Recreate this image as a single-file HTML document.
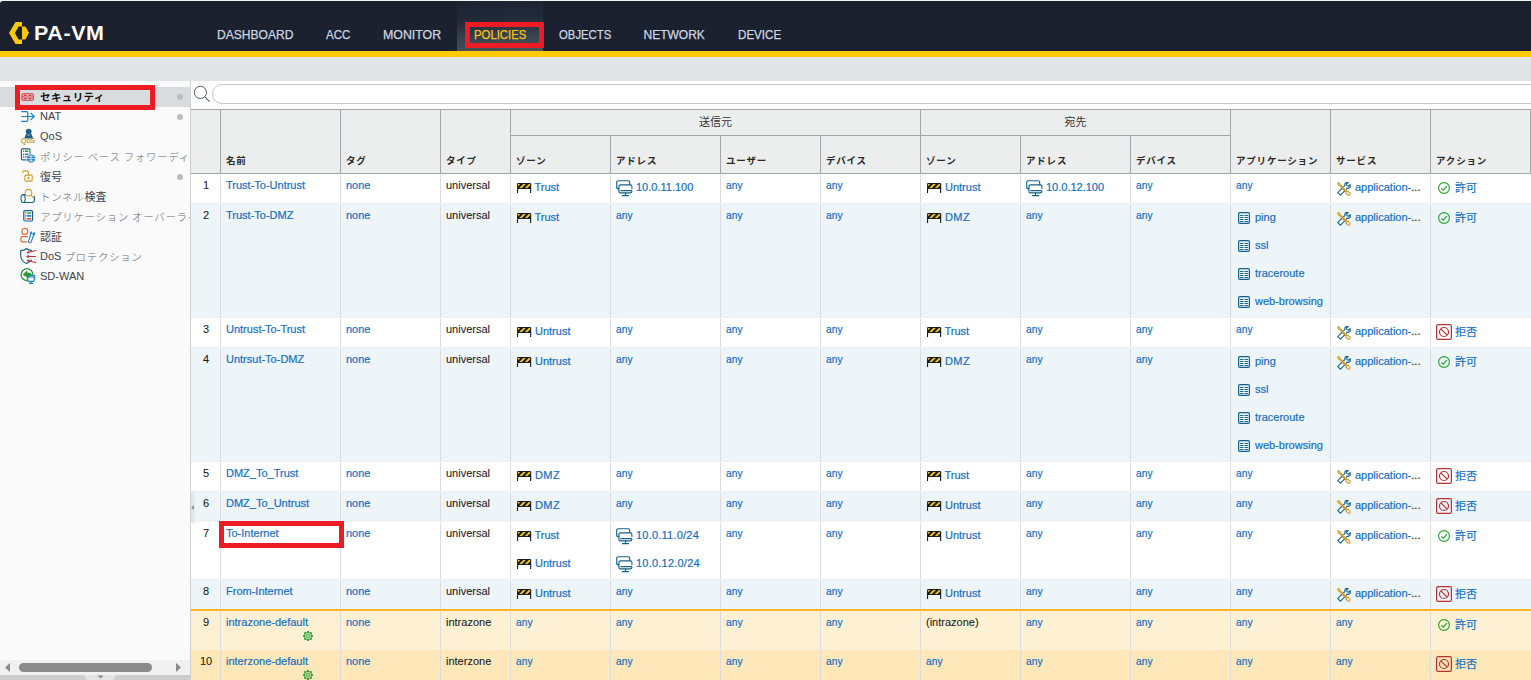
<!DOCTYPE html>
<html lang="ja"><head><meta charset="utf-8"><title>PA-VM</title>
<style>
*{box-sizing:border-box;margin:0;padding:0}
html,body{width:1531px;height:680px;overflow:hidden;background:#fff}
body{font-family:"Liberation Sans", "Noto Sans CJK JP", sans-serif;font-size:11px;color:#1a1a1a;position:relative}
.abs{position:absolute}
#top{left:0;top:0;width:1531px;height:1px;background:#f4f4f4}
#hdr{left:0;top:1px;width:1531px;height:50px;background:#1b212f;border-top-left-radius:3px}
#ybar{left:0;top:51px;width:1531px;height:6px;background:#fdca08}
#gbar{left:0;top:57px;width:1531px;height:24px;background:#e2e3e5}
.nav{position:absolute;top:27px;height:16px;line-height:16px;font-size:12px;color:#cdd6e2;white-space:nowrap;transform-origin:left center;-webkit-text-stroke:0.25px currentColor}
#tabbg{left:457px;top:1px;width:86px;height:50px;background:linear-gradient(176deg,#1c2230 0%,#222a3a 38%,#3a4450 72%,#4b545c 100%)}
.redbox{position:absolute;border:5px solid #ed1c24}
#logo-t{left:34px;top:20px;font-size:20px;font-weight:bold;color:#fff;line-height:26px;letter-spacing:0.6px;white-space:nowrap;transform-origin:left center;transform:scaleX(1.07)}
#side{left:0;top:81px;width:190px;height:599px;background:#fafafa;overflow:hidden}
#sideb{left:190px;top:81px;width:1px;height:599px;background:#cfcfcf}
.si{position:absolute;left:0;width:190px;height:20px}
.si .t{position:absolute;left:40px;top:0;line-height:19px;font-size:11px;color:#3a4450;white-space:nowrap}
.ka{font-size:10.5px;font-weight:300;color:#636b74;letter-spacing:0.65px;position:relative;top:0.6px}
.kj{position:relative;top:0.6px}
.sel .ka{font-weight:bold;color:#111;letter-spacing:0.4px}
.si .ic{position:absolute;left:20px;top:1px;width:16px;height:16px}
.si .dot{position:absolute;left:177px;top:7px;width:6px;height:6px;border-radius:50%;background:#bdbdbd}
#main{left:191px;top:81px;width:1340px;height:599px;background:#fff}
#srch{left:212px;top:84px;width:1340px;height:20px;border:1px solid #c6c6c6;border-radius:10px;background:#fff}
#thead{left:191px;top:109px;width:1340px;height:65px;background:#eceeee;border-top:1px solid #a2a6aa;border-bottom:1px solid #a2a6aa}
.vl{position:absolute;width:1px;background:#a2a6aa}
.hl{position:absolute;height:1px;background:#a2a6aa}
.th{position:absolute;font-size:9.5px;font-weight:bold;color:#2a2a2a;line-height:14px;white-space:nowrap;letter-spacing:0.8px}
.thg{position:absolute;font-size:11px;color:#333;line-height:14px;white-space:nowrap;text-align:center}
.row{position:absolute;left:191px;width:1340px}
.cv{position:absolute;width:1px;background:#dcdcde}
.c{position:absolute;white-space:nowrap;line-height:14px;font-size:11px;color:#146fc4;-webkit-text-stroke:0.2px currentColor}
.a{transform:scaleX(0.93);transform-origin:left center}
.k{color:#1a1a1a;-webkit-text-stroke:0.08px currentColor}
.num{position:absolute;left:0;width:30px;text-align:center;line-height:14px;font-size:11px;color:#1a1a1a;-webkit-text-stroke:0.08px currentColor}
.jp{font-size:11px}
svg{position:absolute;overflow:visible}
</style></head>
<body>
<svg class="abs" style="left:0;top:0" width="0" height="0"><defs><clipPath id="zc"><rect x="0.9" y="0.9" width="12.4" height="4.3" rx="0.6"/></clipPath></defs></svg>
<div class="abs" id="top"></div>
<div class="abs" id="hdr"></div>
<div class="abs" id="tabbg"></div>
<div class="abs" id="ybar"></div>
<div class="abs" id="gbar"></div>
<svg class="abs" style="left:0;top:0" width="40" height="60" viewBox="0 0 40 60"><path d="M9 33 L15.5 22 L22 22 L22 26.6 L18.6 26.6 L14.9 33 L18.6 39.4 L22 39.4 L22 44 L15.5 44 Z" fill="#fdc809"/><path d="M22 26.6 L25.4 26.6 L29 32.8 L25.4 39.4 L22 39.4 Z" fill="#fdc809"/></svg>
<div class="abs" id="logo-t">PA-VM</div>
<div class="nav" id="nav-DASHBOARD" style="left:217.0px;transform:scaleX(1.005)">DASHBOARD</div>
<div class="nav" id="nav-ACC" style="left:325.6px;transform:scaleX(0.960)">ACC</div>
<div class="nav" id="nav-MONITOR" style="left:382.5px;transform:scaleX(1.029)">MONITOR</div>
<div class="nav" id="nav-POLICIES" style="left:474.0px;transform:scaleX(0.945);color:#f6c51b">POLICIES</div>
<div class="nav" id="nav-OBJECTS" style="left:558.5px;transform:scaleX(0.945)">OBJECTS</div>
<div class="nav" id="nav-NETWORK" style="left:643.5px;transform:scaleX(1.000)">NETWORK</div>
<div class="nav" id="nav-DEVICE" style="left:737.5px;transform:scaleX(0.967)">DEVICE</div>
<div class="redbox" style="left:465px;top:22px;width:79px;height:26px"></div>
<div class="abs" id="side">
<div class="abs" style="left:0;top:6px;width:190px;height:20px;background:#d9dcde"></div>
<div class="si sel" id="si0" style="top:6px"><svg class="ic" viewBox="0 0 16 16"><rect x="2" y="5.7" width="11.3" height="6.6" rx="1.2" fill="#f3cfd0" stroke="#c73a3e" stroke-width="1.1"/><path d="M2 9H13.3" stroke="#c73a3e" stroke-width="0.9"/><path d="M3.8 7.4H6.8M8.5 7.4H11.5M3.8 10.7H6.8M8.5 10.7H11.5" stroke="#c73a3e" stroke-width="1.2"/></svg><span class="t"><span class="ka">セキュリティ</span></span><span class="dot"></span></div>
<div class="si" id="si1" style="top:26px"><svg class="ic" viewBox="0 0 16 16"><path d="M1.3 3.7H6.3Q7.8 3.7 7.8 5.2V11.9Q7.8 13.4 6.3 13.4H1.3M1.3 8.5H14M10.6 4.9L14.2 8.5L10.6 12.1" fill="none" stroke="#1a80c2" stroke-width="1.2"/></svg><span class="t">NAT</span><span class="dot"></span></div>
<div class="si" id="si2" style="top:46px"><svg class="ic" viewBox="0 0 16 16"><circle cx="8.7" cy="3.6" r="2.9" fill="#1f5f86"/><path d="M4.2 10.6L5.9 6.2Q8.7 4.8 11.5 6.2L13.2 10.6Z" fill="#1f5f86"/><path d="M7.4 6.6H10L8.7 8.2Z" fill="#9fc0d6"/><text x="0.8" y="15.3" font-size="7.4" font-weight="bold" fill="#cf9f33" font-family="Liberation Sans,sans-serif" letter-spacing="-0.4">QoS</text></svg><span class="t">QoS</span></div>
<div class="si" id="si3" style="top:66px"><svg class="ic" viewBox="0 0 16 16"><rect x="1.4" y="0.9" width="8.6" height="11" rx="1.2" fill="#fff" stroke="#1f5f86" stroke-width="1.1"/><path d="M3 3.3H4.2M5 3.3H8.4" stroke="#2e9a48" stroke-width="1.5"/><path d="M3 6.2H4.2M5 6.2H8.4" stroke="#1a80c2" stroke-width="1.5"/><path d="M3 9.1H4.2M5 9.1H8.4" stroke="#c73a3e" stroke-width="1.5"/><circle cx="11" cy="10.6" r="4.6" fill="#1a80c2" stroke="#fafafa" stroke-width="0.8"/><path d="M11 6.4V14.8M6.8 10.6H15.2M8 7.8Q11 9.6 14 7.8M8 13.4Q11 11.6 14 13.4" fill="none" stroke="#e8f2fa" stroke-width="0.8"/></svg><span class="t"><span class="ka">ポリシー</span> <span class="ka">ベース</span> <span class="ka">フォワーディング</span></span></div>
<div class="si" id="si4" style="top:86px"><svg class="ic" viewBox="0 0 16 16"><rect x="4.9" y="7.1" width="7.3" height="6" rx="1" fill="none" stroke="#d29b2b" stroke-width="1.1"/><path d="M2.6 5.2Q2.4 2.9 4.8 2.9H6.4Q8.4 2.9 8.4 4.8V7.1" fill="none" stroke="#d29b2b" stroke-width="1.1"/><rect x="7.6" y="9" width="1.8" height="2.2" rx="0.4" fill="#d29b2b"/></svg><span class="t"><span class="kj">復号</span></span><span class="dot"></span></div>
<div class="si" id="si5" style="top:106px"><svg class="ic" viewBox="0 0 16 16"><path d="M3.2 6.6Q1 6.6 1 10.5Q1 14.5 3.2 14.5H12.4Q14.6 14.5 14.6 10.5Q14.6 8.6 13.8 7.6M3.2 6.6H5.2M3.2 6.6Q5.2 6.6 5.2 10.5Q5.2 14.5 3.2 14.5" fill="none" stroke="#1f5f86" stroke-width="1.1"/><circle cx="8.5" cy="4.7" r="3.3" fill="#fafafa" stroke="#d29b2b" stroke-width="1.1"/><path d="M10.9 7L14 10.4" stroke="#d29b2b" stroke-width="1.1"/></svg><span class="t"><span class="ka">トンネル</span><span class="kj">検査</span></span></div>
<div class="si" id="si6" style="top:126px"><svg class="ic" viewBox="0 0 16 16"><rect x="3.8" y="2.6" width="8.8" height="10.4" rx="1.2" fill="#fff" stroke="#1f5f86" stroke-width="1.2"/><path d="M5.3 5H6.4M7.2 5H11.2" stroke="#2e9a48" stroke-width="1.6"/><path d="M5.3 7.9H6.4M7.2 7.9H11.2" stroke="#1a80c2" stroke-width="1.6"/><path d="M5.3 10.8H6.4M7.2 10.8H11.2" stroke="#c73a3e" stroke-width="1.6"/></svg><span class="t"><span class="ka">アプリケーション</span> <span class="ka">オーバーライド</span></span></div>
<div class="si" id="si7" style="top:146px"><svg class="ic" viewBox="0 0 16 16"><circle cx="4.8" cy="3.4" r="3" fill="none" stroke="#e2623a" stroke-width="1.15"/><path d="M8 8.6H2.4Q0.9 8.6 0.9 10.2V12.4Q0.9 13.8 2.4 13.8H7" fill="none" stroke="#e2623a" stroke-width="1.15"/><path d="M8.3 13.6L10.5 7.4Q9.6 5.4 11.2 3.8L11.8 5.8L13.2 6.2L14 4.4Q15.4 6.6 13.2 8.2L11 14.4Q9.4 15.4 8.3 13.6Z" fill="#fafafa" stroke="#1a80c2" stroke-width="1.1" stroke-linejoin="round"/></svg><span class="t"><span class="kj">認証</span></span></div>
<div class="si" id="si8" style="top:166px"><svg class="ic" viewBox="0 0 16 16"><path d="M12 2.6Q8.6 2.4 6.6 0.5Q4.4 2.6 0.7 2.6V7.4Q0.7 12.6 6.6 15.6Q10.2 13.8 11.6 11.6" fill="none" stroke="#1f5f86" stroke-width="1.15" stroke-linejoin="round"/><path d="M7 4.7L16 2.4M6.6 8.5H16M7 12.3L16 14.8" stroke="#c0353a" stroke-width="1.05"/><path d="M8.8 2.8L6.4 4.9L9.4 5.6ZM8.8 6.8L6 8.5L8.8 10.2ZM9.4 11.3L6.4 12.2L8.8 14.2Z" fill="#c0353a"/></svg><span class="t">DoS <span class="ka">プロテクション</span></span></div>
<div class="si" id="si9" style="top:186px"><svg class="ic" viewBox="0 0 16 16"><circle cx="7" cy="6.6" r="5.9" fill="#fafafa" stroke="#2a9a3a" stroke-width="1.3"/><path d="M2.6 6.8L7 2.6V4.6Q11.4 4 12.2 7.4Q12.4 9.6 10.6 11.2L6.6 11.6L7 9.2Z" fill="#2a9a3a"/><rect x="9.4" y="7.6" width="5.4" height="4" rx="0.8" fill="#fafafa" stroke="#1a80c2" stroke-width="1.1"/><rect x="7.8" y="9" width="6.4" height="4.4" rx="0.8" fill="#fafafa" stroke="#1a80c2" stroke-width="1.1"/><path d="M11 13.4V15.2M9 15.4H13" stroke="#1a80c2" stroke-width="1.1"/></svg><span class="t">SD-WAN</span></div>
<div class="abs" style="left:0;top:579px;width:190px;height:15px;background:#f1f1f1"></div>
<div class="abs" style="left:19px;top:582px;width:133px;height:9px;border-radius:5px;background:#8b8b8b"></div>
<svg class="abs" style="left:0;top:579px" width="190" height="15"><path d="M5 7.5L10 3V12Z" fill="#8b8b8b"/><path d="M181 7.5L176 3V12Z" fill="#8b8b8b"/></svg>
<div class="abs" style="left:0;top:594px;width:190px;height:5px;background:#cdcdcd"></div>
<svg class="abs" style="left:84px;top:594px" width="34" height="5"><path d="M0 0H32L29 5H3Z" fill="#e3e3e3"/><path d="M13.5 0.5H19.5L16.5 3.5Z" fill="#8b8b8b"/></svg>
</div>
<div class="abs" id="sideb"></div>
<div class="redbox" style="left:15px;top:85px;width:140px;height:25px"></div>
<div class="abs" id="main"></div>
<svg class="abs" style="left:191px;top:83px" width="22" height="22" viewBox="0 0 22 22"><circle cx="9.4" cy="9.4" r="6.1" fill="none" stroke="#555b62" stroke-width="1"/><path d="M13.8 13.8L18.6 18.6" stroke="#555b62" stroke-width="1.1"/></svg>
<div class="abs" id="srch"></div>
<div class="abs" id="thead"></div>
<div class="vl" style="left:220px;top:110px;height:64px"></div>
<div class="vl" style="left:340px;top:110px;height:64px"></div>
<div class="vl" style="left:440px;top:110px;height:64px"></div>
<div class="vl" style="left:510px;top:110px;height:64px"></div>
<div class="vl" style="left:610px;top:136px;height:38px"></div>
<div class="vl" style="left:720px;top:136px;height:38px"></div>
<div class="vl" style="left:820px;top:136px;height:38px"></div>
<div class="vl" style="left:920px;top:110px;height:64px"></div>
<div class="vl" style="left:1020px;top:136px;height:38px"></div>
<div class="vl" style="left:1130px;top:136px;height:38px"></div>
<div class="vl" style="left:1230px;top:110px;height:64px"></div>
<div class="vl" style="left:1330px;top:110px;height:64px"></div>
<div class="vl" style="left:1430px;top:110px;height:64px"></div>
<div class="vl" style="left:1530px;top:110px;height:64px"></div>
<div class="hl" style="left:511px;top:135px;width:720px"></div>
<div class="thg" style="left:511px;top:115px;width:409px">送信元</div>
<div class="thg" style="left:921px;top:115px;width:309px">宛先</div>
<div class="th" id="th0" style="left:226px;top:154px">名前</div>
<div class="th" id="th1" style="left:346px;top:154px">タグ</div>
<div class="th" id="th2" style="left:446px;top:154px">タイプ</div>
<div class="th" id="th3" style="left:516px;top:154px">ゾーン</div>
<div class="th" id="th4" style="left:616px;top:154px">アドレス</div>
<div class="th" id="th5" style="left:726px;top:154px">ユーザー</div>
<div class="th" id="th6" style="left:826px;top:154px">デバイス</div>
<div class="th" id="th7" style="left:926px;top:154px">ゾーン</div>
<div class="th" id="th8" style="left:1026px;top:154px">アドレス</div>
<div class="th" id="th9" style="left:1136px;top:154px">デバイス</div>
<div class="th" id="th10" style="left:1236px;top:154px">アプリケーション</div>
<div class="th" id="th11" style="left:1336px;top:154px">サービス</div>
<div class="th" id="th12" style="left:1436px;top:154px">アクション</div>
<div class="row" id="r1" style="top:174px;height:29px;background:#ffffff">
<div class="cv" style="left:29px;top:1px;height:28px"></div>
<div class="cv" style="left:149px;top:1px;height:28px"></div>
<div class="cv" style="left:249px;top:1px;height:28px"></div>
<div class="cv" style="left:319px;top:1px;height:28px"></div>
<div class="cv" style="left:419px;top:1px;height:28px"></div>
<div class="cv" style="left:529px;top:1px;height:28px"></div>
<div class="cv" style="left:629px;top:1px;height:28px"></div>
<div class="cv" style="left:729px;top:1px;height:28px"></div>
<div class="cv" style="left:829px;top:1px;height:28px"></div>
<div class="cv" style="left:939px;top:1px;height:28px"></div>
<div class="cv" style="left:1039px;top:1px;height:28px"></div>
<div class="cv" style="left:1139px;top:1px;height:28px"></div>
<div class="cv" style="left:1239px;top:1px;height:28px"></div>
<div class="abs" style="left:0;top:29px;width:1340px;height:1px;background:#eff1f1"></div>
<div class="num" style="top:4px">1</div>
<div class="c" style="left:35px;top:4px">Trust-To-Untrust</div>
<div class="c" style="left:155px;top:4px">none</div>
<div class="c k" style="left:255px;top:4px">universal</div>
<svg style="left:326px;top:9px" width="15" height="11" viewBox="0 0 15 11"><rect x="0" y="0" width="14.2" height="6.1" rx="1.3" fill="#141a26"/><g clip-path="url(#zc)"><path d="M0 0.9H3.4L0 4.3ZM2 5.2L6.3 0.9H8.9L4.6 5.2ZM7.6 5.2L11.9 0.9H13.5V1.9L10.2 5.2ZM12.9 5.2L13.5 4.6V5.2Z" fill="#fdc809"/></g><rect x="0" y="5" width="1.1" height="5.1" rx="0.4" fill="#141a26"/><rect x="13.1" y="5" width="1.1" height="5.1" rx="0.4" fill="#141a26"/></svg>
<div class="c" style="left:343.5px;top:6px">Trust</div>
<svg style="left:425px;top:6px" width="17" height="17" viewBox="0 0 17 17"><g fill="none" stroke="#14628c" stroke-width="1.15" stroke-linecap="round" stroke-linejoin="round"><path d="M2.6 8.6H2.2Q0.7 8.6 0.7 7.1V2.2Q0.7 0.7 2.2 0.7H12.2Q13.7 0.7 13.7 2.2V4.6"/><path d="M15.9 8.4V6.4Q15.9 4.8 14.4 4.8H4.4Q2.9 4.8 2.9 6.4V11.2Q2.9 12.8 4.4 12.8H14.4Q15.9 12.8 15.9 11.2Q15.9 10.6 15.2 10.6H4.8"/><path d="M9.5 12.8V15.4M6.4 15.6H12.6"/></g></svg>
<div class="c" style="left:445px;top:6px">10.0.11.100</div>
<div class="c a" style="left:535px;top:4px">any</div>
<div class="c a" style="left:635px;top:4px">any</div>
<svg style="left:736px;top:9px" width="15" height="11" viewBox="0 0 15 11"><rect x="0" y="0" width="14.2" height="6.1" rx="1.3" fill="#141a26"/><g clip-path="url(#zc)"><path d="M0 0.9H3.4L0 4.3ZM2 5.2L6.3 0.9H8.9L4.6 5.2ZM7.6 5.2L11.9 0.9H13.5V1.9L10.2 5.2ZM12.9 5.2L13.5 4.6V5.2Z" fill="#fdc809"/></g><rect x="0" y="5" width="1.1" height="5.1" rx="0.4" fill="#141a26"/><rect x="13.1" y="5" width="1.1" height="5.1" rx="0.4" fill="#141a26"/></svg>
<div class="c" style="left:754.0px;top:6px">Untrust</div>
<svg style="left:835px;top:6px" width="17" height="17" viewBox="0 0 17 17"><g fill="none" stroke="#14628c" stroke-width="1.15" stroke-linecap="round" stroke-linejoin="round"><path d="M2.6 8.6H2.2Q0.7 8.6 0.7 7.1V2.2Q0.7 0.7 2.2 0.7H12.2Q13.7 0.7 13.7 2.2V4.6"/><path d="M15.9 8.4V6.4Q15.9 4.8 14.4 4.8H4.4Q2.9 4.8 2.9 6.4V11.2Q2.9 12.8 4.4 12.8H14.4Q15.9 12.8 15.9 11.2Q15.9 10.6 15.2 10.6H4.8"/><path d="M9.5 12.8V15.4M6.4 15.6H12.6"/></g></svg>
<div class="c" style="left:855px;top:6px">10.0.12.100</div>
<div class="c a" style="left:945px;top:4px">any</div>
<div class="c a" style="left:1045px;top:4px">any</div>
<svg style="left:1146px;top:8px" width="14" height="14" viewBox="0 0 14 14"><g fill="none" stroke-width="1.1" stroke-linejoin="round"><path d="M0.8 10.6L5.2 6.2L7.8 8.8L3.4 13.2Z" stroke="#14628c" fill="#fff"/><path d="M6.4 5L8 3.4Q7.4 1.4 9.4 0.6Q10.4 0.3 11.2 0.6L9.6 2.2L10 3.8L11.6 4.2L13.2 2.6Q13.8 4.6 12.4 5.8Q11.4 6.6 10.2 6.2L8.8 7.6" stroke="#14628c"/><path d="M1.4 0.6L0.6 1.4L1.6 3.2L2.6 3.4L9.2 10L8.8 10.8L11 13Q12 13.6 12.8 12.8Q13.4 12 12.8 11.2L10.6 9L9.8 9.4L3.2 2.8L3 1.8Z" stroke="#d6981d" fill="#fff"/></g></svg>
<div class="c" style="left:1164px;top:6px">application-<span style="color:#222">...</span></div>
<svg style="left:1247px;top:8px" width="13" height="13" viewBox="0 0 13 13"><circle cx="6" cy="6" r="5.4" fill="none" stroke="#22a52c" stroke-width="1.15"/><path d="M3.3 6.3L5.3 8.2L8.9 4.1" fill="none" stroke="#22a52c" stroke-width="1.15"/></svg>
<div class="c jp" style="left:1264px;top:7px">許可</div>
</div>
<div class="row" id="r2" style="top:204px;height:113px;background:#eef5f8">
<div class="cv" style="left:29px;top:1px;height:112px"></div>
<div class="cv" style="left:149px;top:1px;height:112px"></div>
<div class="cv" style="left:249px;top:1px;height:112px"></div>
<div class="cv" style="left:319px;top:1px;height:112px"></div>
<div class="cv" style="left:419px;top:1px;height:112px"></div>
<div class="cv" style="left:529px;top:1px;height:112px"></div>
<div class="cv" style="left:629px;top:1px;height:112px"></div>
<div class="cv" style="left:729px;top:1px;height:112px"></div>
<div class="cv" style="left:829px;top:1px;height:112px"></div>
<div class="cv" style="left:939px;top:1px;height:112px"></div>
<div class="cv" style="left:1039px;top:1px;height:112px"></div>
<div class="cv" style="left:1139px;top:1px;height:112px"></div>
<div class="cv" style="left:1239px;top:1px;height:112px"></div>
<div class="abs" style="left:0;top:113px;width:1340px;height:1px;background:#eff1f1"></div>
<div class="num" style="top:4px">2</div>
<div class="c" style="left:35px;top:4px">Trust-To-DMZ</div>
<div class="c" style="left:155px;top:4px">none</div>
<div class="c k" style="left:255px;top:4px">universal</div>
<svg style="left:326px;top:9px" width="15" height="11" viewBox="0 0 15 11"><rect x="0" y="0" width="14.2" height="6.1" rx="1.3" fill="#141a26"/><g clip-path="url(#zc)"><path d="M0 0.9H3.4L0 4.3ZM2 5.2L6.3 0.9H8.9L4.6 5.2ZM7.6 5.2L11.9 0.9H13.5V1.9L10.2 5.2ZM12.9 5.2L13.5 4.6V5.2Z" fill="#fdc809"/></g><rect x="0" y="5" width="1.1" height="5.1" rx="0.4" fill="#141a26"/><rect x="13.1" y="5" width="1.1" height="5.1" rx="0.4" fill="#141a26"/></svg>
<div class="c" style="left:343.5px;top:6px">Trust</div>
<div class="c a" style="left:425px;top:4px">any</div>
<div class="c a" style="left:535px;top:4px">any</div>
<div class="c a" style="left:635px;top:4px">any</div>
<svg style="left:736px;top:9px" width="15" height="11" viewBox="0 0 15 11"><rect x="0" y="0" width="14.2" height="6.1" rx="1.3" fill="#141a26"/><g clip-path="url(#zc)"><path d="M0 0.9H3.4L0 4.3ZM2 5.2L6.3 0.9H8.9L4.6 5.2ZM7.6 5.2L11.9 0.9H13.5V1.9L10.2 5.2ZM12.9 5.2L13.5 4.6V5.2Z" fill="#fdc809"/></g><rect x="0" y="5" width="1.1" height="5.1" rx="0.4" fill="#141a26"/><rect x="13.1" y="5" width="1.1" height="5.1" rx="0.4" fill="#141a26"/></svg>
<div class="c" style="left:754.0px;top:6px"><span style="letter-spacing:0.4px">DMZ</span></div>
<div class="c a" style="left:835px;top:4px">any</div>
<div class="c a" style="left:945px;top:4px">any</div>
<svg style="left:1047px;top:8px" width="12" height="12" viewBox="0 0 12 12"><rect x="0.6" y="0.6" width="10.8" height="10.8" rx="1.3" fill="none" stroke="#14628c" stroke-width="1.2"/><path d="M1.9 3.5H5.5M6.5 3.5H10.1M1.9 5.5H5.5M6.5 5.5H10.1M1.9 7.5H5.5M6.5 7.5H10.1M1.9 9.5H5.5M6.5 9.5H10.1" stroke="#14628c" stroke-width="0.95"/></svg>
<div class="c" style="left:1064px;top:6px">ping</div>
<svg style="left:1047px;top:36px" width="12" height="12" viewBox="0 0 12 12"><rect x="0.6" y="0.6" width="10.8" height="10.8" rx="1.3" fill="none" stroke="#14628c" stroke-width="1.2"/><path d="M1.9 3.5H5.5M6.5 3.5H10.1M1.9 5.5H5.5M6.5 5.5H10.1M1.9 7.5H5.5M6.5 7.5H10.1M1.9 9.5H5.5M6.5 9.5H10.1" stroke="#14628c" stroke-width="0.95"/></svg>
<div class="c" style="left:1064px;top:34px">ssl</div>
<svg style="left:1047px;top:64px" width="12" height="12" viewBox="0 0 12 12"><rect x="0.6" y="0.6" width="10.8" height="10.8" rx="1.3" fill="none" stroke="#14628c" stroke-width="1.2"/><path d="M1.9 3.5H5.5M6.5 3.5H10.1M1.9 5.5H5.5M6.5 5.5H10.1M1.9 7.5H5.5M6.5 7.5H10.1M1.9 9.5H5.5M6.5 9.5H10.1" stroke="#14628c" stroke-width="0.95"/></svg>
<div class="c" style="left:1064px;top:62px">traceroute</div>
<svg style="left:1047px;top:92px" width="12" height="12" viewBox="0 0 12 12"><rect x="0.6" y="0.6" width="10.8" height="10.8" rx="1.3" fill="none" stroke="#14628c" stroke-width="1.2"/><path d="M1.9 3.5H5.5M6.5 3.5H10.1M1.9 5.5H5.5M6.5 5.5H10.1M1.9 7.5H5.5M6.5 7.5H10.1M1.9 9.5H5.5M6.5 9.5H10.1" stroke="#14628c" stroke-width="0.95"/></svg>
<div class="c" style="left:1064px;top:90px">web-browsing</div>
<svg style="left:1146px;top:8px" width="14" height="14" viewBox="0 0 14 14"><g fill="none" stroke-width="1.1" stroke-linejoin="round"><path d="M0.8 10.6L5.2 6.2L7.8 8.8L3.4 13.2Z" stroke="#14628c" fill="#fff"/><path d="M6.4 5L8 3.4Q7.4 1.4 9.4 0.6Q10.4 0.3 11.2 0.6L9.6 2.2L10 3.8L11.6 4.2L13.2 2.6Q13.8 4.6 12.4 5.8Q11.4 6.6 10.2 6.2L8.8 7.6" stroke="#14628c"/><path d="M1.4 0.6L0.6 1.4L1.6 3.2L2.6 3.4L9.2 10L8.8 10.8L11 13Q12 13.6 12.8 12.8Q13.4 12 12.8 11.2L10.6 9L9.8 9.4L3.2 2.8L3 1.8Z" stroke="#d6981d" fill="#fff"/></g></svg>
<div class="c" style="left:1164px;top:6px">application-<span style="color:#222">...</span></div>
<svg style="left:1247px;top:8px" width="13" height="13" viewBox="0 0 13 13"><circle cx="6" cy="6" r="5.4" fill="none" stroke="#22a52c" stroke-width="1.15"/><path d="M3.3 6.3L5.3 8.2L8.9 4.1" fill="none" stroke="#22a52c" stroke-width="1.15"/></svg>
<div class="c jp" style="left:1264px;top:7px">許可</div>
</div>
<div class="row" id="r3" style="top:318px;height:29px;background:#ffffff">
<div class="cv" style="left:29px;top:1px;height:28px"></div>
<div class="cv" style="left:149px;top:1px;height:28px"></div>
<div class="cv" style="left:249px;top:1px;height:28px"></div>
<div class="cv" style="left:319px;top:1px;height:28px"></div>
<div class="cv" style="left:419px;top:1px;height:28px"></div>
<div class="cv" style="left:529px;top:1px;height:28px"></div>
<div class="cv" style="left:629px;top:1px;height:28px"></div>
<div class="cv" style="left:729px;top:1px;height:28px"></div>
<div class="cv" style="left:829px;top:1px;height:28px"></div>
<div class="cv" style="left:939px;top:1px;height:28px"></div>
<div class="cv" style="left:1039px;top:1px;height:28px"></div>
<div class="cv" style="left:1139px;top:1px;height:28px"></div>
<div class="cv" style="left:1239px;top:1px;height:28px"></div>
<div class="abs" style="left:0;top:29px;width:1340px;height:1px;background:#eff1f1"></div>
<div class="num" style="top:4px">3</div>
<div class="c" style="left:35px;top:4px">Untrust-To-Trust</div>
<div class="c" style="left:155px;top:4px">none</div>
<div class="c k" style="left:255px;top:4px">universal</div>
<svg style="left:326px;top:9px" width="15" height="11" viewBox="0 0 15 11"><rect x="0" y="0" width="14.2" height="6.1" rx="1.3" fill="#141a26"/><g clip-path="url(#zc)"><path d="M0 0.9H3.4L0 4.3ZM2 5.2L6.3 0.9H8.9L4.6 5.2ZM7.6 5.2L11.9 0.9H13.5V1.9L10.2 5.2ZM12.9 5.2L13.5 4.6V5.2Z" fill="#fdc809"/></g><rect x="0" y="5" width="1.1" height="5.1" rx="0.4" fill="#141a26"/><rect x="13.1" y="5" width="1.1" height="5.1" rx="0.4" fill="#141a26"/></svg>
<div class="c" style="left:344.0px;top:6px">Untrust</div>
<div class="c a" style="left:425px;top:4px">any</div>
<div class="c a" style="left:535px;top:4px">any</div>
<div class="c a" style="left:635px;top:4px">any</div>
<svg style="left:736px;top:9px" width="15" height="11" viewBox="0 0 15 11"><rect x="0" y="0" width="14.2" height="6.1" rx="1.3" fill="#141a26"/><g clip-path="url(#zc)"><path d="M0 0.9H3.4L0 4.3ZM2 5.2L6.3 0.9H8.9L4.6 5.2ZM7.6 5.2L11.9 0.9H13.5V1.9L10.2 5.2ZM12.9 5.2L13.5 4.6V5.2Z" fill="#fdc809"/></g><rect x="0" y="5" width="1.1" height="5.1" rx="0.4" fill="#141a26"/><rect x="13.1" y="5" width="1.1" height="5.1" rx="0.4" fill="#141a26"/></svg>
<div class="c" style="left:753.5px;top:6px">Trust</div>
<div class="c a" style="left:835px;top:4px">any</div>
<div class="c a" style="left:945px;top:4px">any</div>
<div class="c a" style="left:1045px;top:4px">any</div>
<svg style="left:1146px;top:8px" width="14" height="14" viewBox="0 0 14 14"><g fill="none" stroke-width="1.1" stroke-linejoin="round"><path d="M0.8 10.6L5.2 6.2L7.8 8.8L3.4 13.2Z" stroke="#14628c" fill="#fff"/><path d="M6.4 5L8 3.4Q7.4 1.4 9.4 0.6Q10.4 0.3 11.2 0.6L9.6 2.2L10 3.8L11.6 4.2L13.2 2.6Q13.8 4.6 12.4 5.8Q11.4 6.6 10.2 6.2L8.8 7.6" stroke="#14628c"/><path d="M1.4 0.6L0.6 1.4L1.6 3.2L2.6 3.4L9.2 10L8.8 10.8L11 13Q12 13.6 12.8 12.8Q13.4 12 12.8 11.2L10.6 9L9.8 9.4L3.2 2.8L3 1.8Z" stroke="#d6981d" fill="#fff"/></g></svg>
<div class="c" style="left:1164px;top:6px">application-<span style="color:#222">...</span></div>
<svg style="left:1245px;top:6px" width="16" height="16" viewBox="0 0 16 16"><rect x="0.6" y="0.6" width="14.8" height="14.8" rx="1.6" fill="none" stroke="#b93030" stroke-width="1.2"/><circle cx="8" cy="8" r="4.5" fill="none" stroke="#b93030" stroke-width="1.2"/><path d="M4.8 4.8L11.2 11.2" stroke="#b93030" stroke-width="1.2"/></svg>
<div class="c jp" style="left:1264px;top:7px">拒否</div>
</div>
<div class="row" id="r4" style="top:348px;height:113px;background:#eef5f8">
<div class="cv" style="left:29px;top:1px;height:112px"></div>
<div class="cv" style="left:149px;top:1px;height:112px"></div>
<div class="cv" style="left:249px;top:1px;height:112px"></div>
<div class="cv" style="left:319px;top:1px;height:112px"></div>
<div class="cv" style="left:419px;top:1px;height:112px"></div>
<div class="cv" style="left:529px;top:1px;height:112px"></div>
<div class="cv" style="left:629px;top:1px;height:112px"></div>
<div class="cv" style="left:729px;top:1px;height:112px"></div>
<div class="cv" style="left:829px;top:1px;height:112px"></div>
<div class="cv" style="left:939px;top:1px;height:112px"></div>
<div class="cv" style="left:1039px;top:1px;height:112px"></div>
<div class="cv" style="left:1139px;top:1px;height:112px"></div>
<div class="cv" style="left:1239px;top:1px;height:112px"></div>
<div class="abs" style="left:0;top:113px;width:1340px;height:1px;background:#eff1f1"></div>
<div class="num" style="top:4px">4</div>
<div class="c" style="left:35px;top:4px">Untrsut-To-DMZ</div>
<div class="c" style="left:155px;top:4px">none</div>
<div class="c k" style="left:255px;top:4px">universal</div>
<svg style="left:326px;top:9px" width="15" height="11" viewBox="0 0 15 11"><rect x="0" y="0" width="14.2" height="6.1" rx="1.3" fill="#141a26"/><g clip-path="url(#zc)"><path d="M0 0.9H3.4L0 4.3ZM2 5.2L6.3 0.9H8.9L4.6 5.2ZM7.6 5.2L11.9 0.9H13.5V1.9L10.2 5.2ZM12.9 5.2L13.5 4.6V5.2Z" fill="#fdc809"/></g><rect x="0" y="5" width="1.1" height="5.1" rx="0.4" fill="#141a26"/><rect x="13.1" y="5" width="1.1" height="5.1" rx="0.4" fill="#141a26"/></svg>
<div class="c" style="left:344.0px;top:6px">Untrust</div>
<div class="c a" style="left:425px;top:4px">any</div>
<div class="c a" style="left:535px;top:4px">any</div>
<div class="c a" style="left:635px;top:4px">any</div>
<svg style="left:736px;top:9px" width="15" height="11" viewBox="0 0 15 11"><rect x="0" y="0" width="14.2" height="6.1" rx="1.3" fill="#141a26"/><g clip-path="url(#zc)"><path d="M0 0.9H3.4L0 4.3ZM2 5.2L6.3 0.9H8.9L4.6 5.2ZM7.6 5.2L11.9 0.9H13.5V1.9L10.2 5.2ZM12.9 5.2L13.5 4.6V5.2Z" fill="#fdc809"/></g><rect x="0" y="5" width="1.1" height="5.1" rx="0.4" fill="#141a26"/><rect x="13.1" y="5" width="1.1" height="5.1" rx="0.4" fill="#141a26"/></svg>
<div class="c" style="left:754.0px;top:6px"><span style="letter-spacing:0.4px">DMZ</span></div>
<div class="c a" style="left:835px;top:4px">any</div>
<div class="c a" style="left:945px;top:4px">any</div>
<svg style="left:1047px;top:8px" width="12" height="12" viewBox="0 0 12 12"><rect x="0.6" y="0.6" width="10.8" height="10.8" rx="1.3" fill="none" stroke="#14628c" stroke-width="1.2"/><path d="M1.9 3.5H5.5M6.5 3.5H10.1M1.9 5.5H5.5M6.5 5.5H10.1M1.9 7.5H5.5M6.5 7.5H10.1M1.9 9.5H5.5M6.5 9.5H10.1" stroke="#14628c" stroke-width="0.95"/></svg>
<div class="c" style="left:1064px;top:6px">ping</div>
<svg style="left:1047px;top:36px" width="12" height="12" viewBox="0 0 12 12"><rect x="0.6" y="0.6" width="10.8" height="10.8" rx="1.3" fill="none" stroke="#14628c" stroke-width="1.2"/><path d="M1.9 3.5H5.5M6.5 3.5H10.1M1.9 5.5H5.5M6.5 5.5H10.1M1.9 7.5H5.5M6.5 7.5H10.1M1.9 9.5H5.5M6.5 9.5H10.1" stroke="#14628c" stroke-width="0.95"/></svg>
<div class="c" style="left:1064px;top:34px">ssl</div>
<svg style="left:1047px;top:64px" width="12" height="12" viewBox="0 0 12 12"><rect x="0.6" y="0.6" width="10.8" height="10.8" rx="1.3" fill="none" stroke="#14628c" stroke-width="1.2"/><path d="M1.9 3.5H5.5M6.5 3.5H10.1M1.9 5.5H5.5M6.5 5.5H10.1M1.9 7.5H5.5M6.5 7.5H10.1M1.9 9.5H5.5M6.5 9.5H10.1" stroke="#14628c" stroke-width="0.95"/></svg>
<div class="c" style="left:1064px;top:62px">traceroute</div>
<svg style="left:1047px;top:92px" width="12" height="12" viewBox="0 0 12 12"><rect x="0.6" y="0.6" width="10.8" height="10.8" rx="1.3" fill="none" stroke="#14628c" stroke-width="1.2"/><path d="M1.9 3.5H5.5M6.5 3.5H10.1M1.9 5.5H5.5M6.5 5.5H10.1M1.9 7.5H5.5M6.5 7.5H10.1M1.9 9.5H5.5M6.5 9.5H10.1" stroke="#14628c" stroke-width="0.95"/></svg>
<div class="c" style="left:1064px;top:90px">web-browsing</div>
<svg style="left:1146px;top:8px" width="14" height="14" viewBox="0 0 14 14"><g fill="none" stroke-width="1.1" stroke-linejoin="round"><path d="M0.8 10.6L5.2 6.2L7.8 8.8L3.4 13.2Z" stroke="#14628c" fill="#fff"/><path d="M6.4 5L8 3.4Q7.4 1.4 9.4 0.6Q10.4 0.3 11.2 0.6L9.6 2.2L10 3.8L11.6 4.2L13.2 2.6Q13.8 4.6 12.4 5.8Q11.4 6.6 10.2 6.2L8.8 7.6" stroke="#14628c"/><path d="M1.4 0.6L0.6 1.4L1.6 3.2L2.6 3.4L9.2 10L8.8 10.8L11 13Q12 13.6 12.8 12.8Q13.4 12 12.8 11.2L10.6 9L9.8 9.4L3.2 2.8L3 1.8Z" stroke="#d6981d" fill="#fff"/></g></svg>
<div class="c" style="left:1164px;top:6px">application-<span style="color:#222">...</span></div>
<svg style="left:1247px;top:8px" width="13" height="13" viewBox="0 0 13 13"><circle cx="6" cy="6" r="5.4" fill="none" stroke="#22a52c" stroke-width="1.15"/><path d="M3.3 6.3L5.3 8.2L8.9 4.1" fill="none" stroke="#22a52c" stroke-width="1.15"/></svg>
<div class="c jp" style="left:1264px;top:7px">許可</div>
</div>
<div class="row" id="r5" style="top:462px;height:29px;background:#ffffff">
<div class="cv" style="left:29px;top:1px;height:28px"></div>
<div class="cv" style="left:149px;top:1px;height:28px"></div>
<div class="cv" style="left:249px;top:1px;height:28px"></div>
<div class="cv" style="left:319px;top:1px;height:28px"></div>
<div class="cv" style="left:419px;top:1px;height:28px"></div>
<div class="cv" style="left:529px;top:1px;height:28px"></div>
<div class="cv" style="left:629px;top:1px;height:28px"></div>
<div class="cv" style="left:729px;top:1px;height:28px"></div>
<div class="cv" style="left:829px;top:1px;height:28px"></div>
<div class="cv" style="left:939px;top:1px;height:28px"></div>
<div class="cv" style="left:1039px;top:1px;height:28px"></div>
<div class="cv" style="left:1139px;top:1px;height:28px"></div>
<div class="cv" style="left:1239px;top:1px;height:28px"></div>
<div class="abs" style="left:0;top:29px;width:1340px;height:1px;background:#eff1f1"></div>
<div class="num" style="top:4px">5</div>
<div class="c" style="left:35px;top:4px">DMZ_To_Trust</div>
<div class="c" style="left:155px;top:4px">none</div>
<div class="c k" style="left:255px;top:4px">universal</div>
<svg style="left:326px;top:9px" width="15" height="11" viewBox="0 0 15 11"><rect x="0" y="0" width="14.2" height="6.1" rx="1.3" fill="#141a26"/><g clip-path="url(#zc)"><path d="M0 0.9H3.4L0 4.3ZM2 5.2L6.3 0.9H8.9L4.6 5.2ZM7.6 5.2L11.9 0.9H13.5V1.9L10.2 5.2ZM12.9 5.2L13.5 4.6V5.2Z" fill="#fdc809"/></g><rect x="0" y="5" width="1.1" height="5.1" rx="0.4" fill="#141a26"/><rect x="13.1" y="5" width="1.1" height="5.1" rx="0.4" fill="#141a26"/></svg>
<div class="c" style="left:344.0px;top:6px"><span style="letter-spacing:0.4px">DMZ</span></div>
<div class="c a" style="left:425px;top:4px">any</div>
<div class="c a" style="left:535px;top:4px">any</div>
<div class="c a" style="left:635px;top:4px">any</div>
<svg style="left:736px;top:9px" width="15" height="11" viewBox="0 0 15 11"><rect x="0" y="0" width="14.2" height="6.1" rx="1.3" fill="#141a26"/><g clip-path="url(#zc)"><path d="M0 0.9H3.4L0 4.3ZM2 5.2L6.3 0.9H8.9L4.6 5.2ZM7.6 5.2L11.9 0.9H13.5V1.9L10.2 5.2ZM12.9 5.2L13.5 4.6V5.2Z" fill="#fdc809"/></g><rect x="0" y="5" width="1.1" height="5.1" rx="0.4" fill="#141a26"/><rect x="13.1" y="5" width="1.1" height="5.1" rx="0.4" fill="#141a26"/></svg>
<div class="c" style="left:753.5px;top:6px">Trust</div>
<div class="c a" style="left:835px;top:4px">any</div>
<div class="c a" style="left:945px;top:4px">any</div>
<div class="c a" style="left:1045px;top:4px">any</div>
<svg style="left:1146px;top:8px" width="14" height="14" viewBox="0 0 14 14"><g fill="none" stroke-width="1.1" stroke-linejoin="round"><path d="M0.8 10.6L5.2 6.2L7.8 8.8L3.4 13.2Z" stroke="#14628c" fill="#fff"/><path d="M6.4 5L8 3.4Q7.4 1.4 9.4 0.6Q10.4 0.3 11.2 0.6L9.6 2.2L10 3.8L11.6 4.2L13.2 2.6Q13.8 4.6 12.4 5.8Q11.4 6.6 10.2 6.2L8.8 7.6" stroke="#14628c"/><path d="M1.4 0.6L0.6 1.4L1.6 3.2L2.6 3.4L9.2 10L8.8 10.8L11 13Q12 13.6 12.8 12.8Q13.4 12 12.8 11.2L10.6 9L9.8 9.4L3.2 2.8L3 1.8Z" stroke="#d6981d" fill="#fff"/></g></svg>
<div class="c" style="left:1164px;top:6px">application-<span style="color:#222">...</span></div>
<svg style="left:1245px;top:6px" width="16" height="16" viewBox="0 0 16 16"><rect x="0.6" y="0.6" width="14.8" height="14.8" rx="1.6" fill="none" stroke="#b93030" stroke-width="1.2"/><circle cx="8" cy="8" r="4.5" fill="none" stroke="#b93030" stroke-width="1.2"/><path d="M4.8 4.8L11.2 11.2" stroke="#b93030" stroke-width="1.2"/></svg>
<div class="c jp" style="left:1264px;top:7px">拒否</div>
</div>
<div class="row" id="r6" style="top:492px;height:29px;background:#eef5f8">
<div class="cv" style="left:29px;top:1px;height:28px"></div>
<div class="cv" style="left:149px;top:1px;height:28px"></div>
<div class="cv" style="left:249px;top:1px;height:28px"></div>
<div class="cv" style="left:319px;top:1px;height:28px"></div>
<div class="cv" style="left:419px;top:1px;height:28px"></div>
<div class="cv" style="left:529px;top:1px;height:28px"></div>
<div class="cv" style="left:629px;top:1px;height:28px"></div>
<div class="cv" style="left:729px;top:1px;height:28px"></div>
<div class="cv" style="left:829px;top:1px;height:28px"></div>
<div class="cv" style="left:939px;top:1px;height:28px"></div>
<div class="cv" style="left:1039px;top:1px;height:28px"></div>
<div class="cv" style="left:1139px;top:1px;height:28px"></div>
<div class="cv" style="left:1239px;top:1px;height:28px"></div>
<div class="abs" style="left:0;top:29px;width:1340px;height:1px;background:#eff1f1"></div>
<div class="num" style="top:4px">6</div>
<div class="c" style="left:35px;top:4px">DMZ_To_Untrust</div>
<div class="c" style="left:155px;top:4px">none</div>
<div class="c k" style="left:255px;top:4px">universal</div>
<svg style="left:326px;top:9px" width="15" height="11" viewBox="0 0 15 11"><rect x="0" y="0" width="14.2" height="6.1" rx="1.3" fill="#141a26"/><g clip-path="url(#zc)"><path d="M0 0.9H3.4L0 4.3ZM2 5.2L6.3 0.9H8.9L4.6 5.2ZM7.6 5.2L11.9 0.9H13.5V1.9L10.2 5.2ZM12.9 5.2L13.5 4.6V5.2Z" fill="#fdc809"/></g><rect x="0" y="5" width="1.1" height="5.1" rx="0.4" fill="#141a26"/><rect x="13.1" y="5" width="1.1" height="5.1" rx="0.4" fill="#141a26"/></svg>
<div class="c" style="left:344.0px;top:6px"><span style="letter-spacing:0.4px">DMZ</span></div>
<div class="c a" style="left:425px;top:4px">any</div>
<div class="c a" style="left:535px;top:4px">any</div>
<div class="c a" style="left:635px;top:4px">any</div>
<svg style="left:736px;top:9px" width="15" height="11" viewBox="0 0 15 11"><rect x="0" y="0" width="14.2" height="6.1" rx="1.3" fill="#141a26"/><g clip-path="url(#zc)"><path d="M0 0.9H3.4L0 4.3ZM2 5.2L6.3 0.9H8.9L4.6 5.2ZM7.6 5.2L11.9 0.9H13.5V1.9L10.2 5.2ZM12.9 5.2L13.5 4.6V5.2Z" fill="#fdc809"/></g><rect x="0" y="5" width="1.1" height="5.1" rx="0.4" fill="#141a26"/><rect x="13.1" y="5" width="1.1" height="5.1" rx="0.4" fill="#141a26"/></svg>
<div class="c" style="left:754.0px;top:6px">Untrust</div>
<div class="c a" style="left:835px;top:4px">any</div>
<div class="c a" style="left:945px;top:4px">any</div>
<div class="c a" style="left:1045px;top:4px">any</div>
<svg style="left:1146px;top:8px" width="14" height="14" viewBox="0 0 14 14"><g fill="none" stroke-width="1.1" stroke-linejoin="round"><path d="M0.8 10.6L5.2 6.2L7.8 8.8L3.4 13.2Z" stroke="#14628c" fill="#fff"/><path d="M6.4 5L8 3.4Q7.4 1.4 9.4 0.6Q10.4 0.3 11.2 0.6L9.6 2.2L10 3.8L11.6 4.2L13.2 2.6Q13.8 4.6 12.4 5.8Q11.4 6.6 10.2 6.2L8.8 7.6" stroke="#14628c"/><path d="M1.4 0.6L0.6 1.4L1.6 3.2L2.6 3.4L9.2 10L8.8 10.8L11 13Q12 13.6 12.8 12.8Q13.4 12 12.8 11.2L10.6 9L9.8 9.4L3.2 2.8L3 1.8Z" stroke="#d6981d" fill="#fff"/></g></svg>
<div class="c" style="left:1164px;top:6px">application-<span style="color:#222">...</span></div>
<svg style="left:1245px;top:6px" width="16" height="16" viewBox="0 0 16 16"><rect x="0.6" y="0.6" width="14.8" height="14.8" rx="1.6" fill="none" stroke="#b93030" stroke-width="1.2"/><circle cx="8" cy="8" r="4.5" fill="none" stroke="#b93030" stroke-width="1.2"/><path d="M4.8 4.8L11.2 11.2" stroke="#b93030" stroke-width="1.2"/></svg>
<div class="c jp" style="left:1264px;top:7px">拒否</div>
</div>
<div class="row" id="r7" style="top:522px;height:57px;background:#ffffff">
<div class="cv" style="left:29px;top:1px;height:56px"></div>
<div class="cv" style="left:149px;top:1px;height:56px"></div>
<div class="cv" style="left:249px;top:1px;height:56px"></div>
<div class="cv" style="left:319px;top:1px;height:56px"></div>
<div class="cv" style="left:419px;top:1px;height:56px"></div>
<div class="cv" style="left:529px;top:1px;height:56px"></div>
<div class="cv" style="left:629px;top:1px;height:56px"></div>
<div class="cv" style="left:729px;top:1px;height:56px"></div>
<div class="cv" style="left:829px;top:1px;height:56px"></div>
<div class="cv" style="left:939px;top:1px;height:56px"></div>
<div class="cv" style="left:1039px;top:1px;height:56px"></div>
<div class="cv" style="left:1139px;top:1px;height:56px"></div>
<div class="cv" style="left:1239px;top:1px;height:56px"></div>
<div class="abs" style="left:0;top:57px;width:1340px;height:1px;background:#eff1f1"></div>
<div class="num" style="top:4px">7</div>
<div class="c" style="left:35px;top:4px">To-Internet</div>
<div class="c" style="left:155px;top:4px">none</div>
<div class="c k" style="left:255px;top:4px">universal</div>
<svg style="left:326px;top:9px" width="15" height="11" viewBox="0 0 15 11"><rect x="0" y="0" width="14.2" height="6.1" rx="1.3" fill="#141a26"/><g clip-path="url(#zc)"><path d="M0 0.9H3.4L0 4.3ZM2 5.2L6.3 0.9H8.9L4.6 5.2ZM7.6 5.2L11.9 0.9H13.5V1.9L10.2 5.2ZM12.9 5.2L13.5 4.6V5.2Z" fill="#fdc809"/></g><rect x="0" y="5" width="1.1" height="5.1" rx="0.4" fill="#141a26"/><rect x="13.1" y="5" width="1.1" height="5.1" rx="0.4" fill="#141a26"/></svg>
<div class="c" style="left:343.5px;top:6px">Trust</div>
<svg style="left:326px;top:37px" width="15" height="11" viewBox="0 0 15 11"><rect x="0" y="0" width="14.2" height="6.1" rx="1.3" fill="#141a26"/><g clip-path="url(#zc)"><path d="M0 0.9H3.4L0 4.3ZM2 5.2L6.3 0.9H8.9L4.6 5.2ZM7.6 5.2L11.9 0.9H13.5V1.9L10.2 5.2ZM12.9 5.2L13.5 4.6V5.2Z" fill="#fdc809"/></g><rect x="0" y="5" width="1.1" height="5.1" rx="0.4" fill="#141a26"/><rect x="13.1" y="5" width="1.1" height="5.1" rx="0.4" fill="#141a26"/></svg>
<div class="c" style="left:344.0px;top:34px">Untrust</div>
<svg style="left:425px;top:6px" width="17" height="17" viewBox="0 0 17 17"><g fill="none" stroke="#14628c" stroke-width="1.15" stroke-linecap="round" stroke-linejoin="round"><path d="M2.6 8.6H2.2Q0.7 8.6 0.7 7.1V2.2Q0.7 0.7 2.2 0.7H12.2Q13.7 0.7 13.7 2.2V4.6"/><path d="M15.9 8.4V6.4Q15.9 4.8 14.4 4.8H4.4Q2.9 4.8 2.9 6.4V11.2Q2.9 12.8 4.4 12.8H14.4Q15.9 12.8 15.9 11.2Q15.9 10.6 15.2 10.6H4.8"/><path d="M9.5 12.8V15.4M6.4 15.6H12.6"/></g></svg>
<div class="c" style="left:445px;top:6px;letter-spacing:0.22px">10.0.11.0/24</div>
<svg style="left:425px;top:34px" width="17" height="17" viewBox="0 0 17 17"><g fill="none" stroke="#14628c" stroke-width="1.15" stroke-linecap="round" stroke-linejoin="round"><path d="M2.6 8.6H2.2Q0.7 8.6 0.7 7.1V2.2Q0.7 0.7 2.2 0.7H12.2Q13.7 0.7 13.7 2.2V4.6"/><path d="M15.9 8.4V6.4Q15.9 4.8 14.4 4.8H4.4Q2.9 4.8 2.9 6.4V11.2Q2.9 12.8 4.4 12.8H14.4Q15.9 12.8 15.9 11.2Q15.9 10.6 15.2 10.6H4.8"/><path d="M9.5 12.8V15.4M6.4 15.6H12.6"/></g></svg>
<div class="c" style="left:445px;top:34px;letter-spacing:0.22px">10.0.12.0/24</div>
<div class="c a" style="left:535px;top:4px">any</div>
<div class="c a" style="left:635px;top:4px">any</div>
<svg style="left:736px;top:9px" width="15" height="11" viewBox="0 0 15 11"><rect x="0" y="0" width="14.2" height="6.1" rx="1.3" fill="#141a26"/><g clip-path="url(#zc)"><path d="M0 0.9H3.4L0 4.3ZM2 5.2L6.3 0.9H8.9L4.6 5.2ZM7.6 5.2L11.9 0.9H13.5V1.9L10.2 5.2ZM12.9 5.2L13.5 4.6V5.2Z" fill="#fdc809"/></g><rect x="0" y="5" width="1.1" height="5.1" rx="0.4" fill="#141a26"/><rect x="13.1" y="5" width="1.1" height="5.1" rx="0.4" fill="#141a26"/></svg>
<div class="c" style="left:754.0px;top:6px">Untrust</div>
<div class="c a" style="left:835px;top:4px">any</div>
<div class="c a" style="left:945px;top:4px">any</div>
<div class="c a" style="left:1045px;top:4px">any</div>
<svg style="left:1146px;top:8px" width="14" height="14" viewBox="0 0 14 14"><g fill="none" stroke-width="1.1" stroke-linejoin="round"><path d="M0.8 10.6L5.2 6.2L7.8 8.8L3.4 13.2Z" stroke="#14628c" fill="#fff"/><path d="M6.4 5L8 3.4Q7.4 1.4 9.4 0.6Q10.4 0.3 11.2 0.6L9.6 2.2L10 3.8L11.6 4.2L13.2 2.6Q13.8 4.6 12.4 5.8Q11.4 6.6 10.2 6.2L8.8 7.6" stroke="#14628c"/><path d="M1.4 0.6L0.6 1.4L1.6 3.2L2.6 3.4L9.2 10L8.8 10.8L11 13Q12 13.6 12.8 12.8Q13.4 12 12.8 11.2L10.6 9L9.8 9.4L3.2 2.8L3 1.8Z" stroke="#d6981d" fill="#fff"/></g></svg>
<div class="c" style="left:1164px;top:6px">application-<span style="color:#222">...</span></div>
<svg style="left:1247px;top:8px" width="13" height="13" viewBox="0 0 13 13"><circle cx="6" cy="6" r="5.4" fill="none" stroke="#22a52c" stroke-width="1.15"/><path d="M3.3 6.3L5.3 8.2L8.9 4.1" fill="none" stroke="#22a52c" stroke-width="1.15"/></svg>
<div class="c jp" style="left:1264px;top:7px">許可</div>
</div>
<div class="row" id="r8" style="top:580px;height:29px;background:#eef5f8">
<div class="cv" style="left:29px;top:1px;height:28px"></div>
<div class="cv" style="left:149px;top:1px;height:28px"></div>
<div class="cv" style="left:249px;top:1px;height:28px"></div>
<div class="cv" style="left:319px;top:1px;height:28px"></div>
<div class="cv" style="left:419px;top:1px;height:28px"></div>
<div class="cv" style="left:529px;top:1px;height:28px"></div>
<div class="cv" style="left:629px;top:1px;height:28px"></div>
<div class="cv" style="left:729px;top:1px;height:28px"></div>
<div class="cv" style="left:829px;top:1px;height:28px"></div>
<div class="cv" style="left:939px;top:1px;height:28px"></div>
<div class="cv" style="left:1039px;top:1px;height:28px"></div>
<div class="cv" style="left:1139px;top:1px;height:28px"></div>
<div class="cv" style="left:1239px;top:1px;height:28px"></div>
<div class="num" style="top:4px">8</div>
<div class="c" style="left:35px;top:4px">From-Internet</div>
<div class="c" style="left:155px;top:4px">none</div>
<div class="c k" style="left:255px;top:4px">universal</div>
<svg style="left:326px;top:9px" width="15" height="11" viewBox="0 0 15 11"><rect x="0" y="0" width="14.2" height="6.1" rx="1.3" fill="#141a26"/><g clip-path="url(#zc)"><path d="M0 0.9H3.4L0 4.3ZM2 5.2L6.3 0.9H8.9L4.6 5.2ZM7.6 5.2L11.9 0.9H13.5V1.9L10.2 5.2ZM12.9 5.2L13.5 4.6V5.2Z" fill="#fdc809"/></g><rect x="0" y="5" width="1.1" height="5.1" rx="0.4" fill="#141a26"/><rect x="13.1" y="5" width="1.1" height="5.1" rx="0.4" fill="#141a26"/></svg>
<div class="c" style="left:344.0px;top:6px">Untrust</div>
<div class="c a" style="left:425px;top:4px">any</div>
<div class="c a" style="left:535px;top:4px">any</div>
<div class="c a" style="left:635px;top:4px">any</div>
<svg style="left:736px;top:9px" width="15" height="11" viewBox="0 0 15 11"><rect x="0" y="0" width="14.2" height="6.1" rx="1.3" fill="#141a26"/><g clip-path="url(#zc)"><path d="M0 0.9H3.4L0 4.3ZM2 5.2L6.3 0.9H8.9L4.6 5.2ZM7.6 5.2L11.9 0.9H13.5V1.9L10.2 5.2ZM12.9 5.2L13.5 4.6V5.2Z" fill="#fdc809"/></g><rect x="0" y="5" width="1.1" height="5.1" rx="0.4" fill="#141a26"/><rect x="13.1" y="5" width="1.1" height="5.1" rx="0.4" fill="#141a26"/></svg>
<div class="c" style="left:754.0px;top:6px">Untrust</div>
<div class="c a" style="left:835px;top:4px">any</div>
<div class="c a" style="left:945px;top:4px">any</div>
<div class="c a" style="left:1045px;top:4px">any</div>
<svg style="left:1146px;top:8px" width="14" height="14" viewBox="0 0 14 14"><g fill="none" stroke-width="1.1" stroke-linejoin="round"><path d="M0.8 10.6L5.2 6.2L7.8 8.8L3.4 13.2Z" stroke="#14628c" fill="#fff"/><path d="M6.4 5L8 3.4Q7.4 1.4 9.4 0.6Q10.4 0.3 11.2 0.6L9.6 2.2L10 3.8L11.6 4.2L13.2 2.6Q13.8 4.6 12.4 5.8Q11.4 6.6 10.2 6.2L8.8 7.6" stroke="#14628c"/><path d="M1.4 0.6L0.6 1.4L1.6 3.2L2.6 3.4L9.2 10L8.8 10.8L11 13Q12 13.6 12.8 12.8Q13.4 12 12.8 11.2L10.6 9L9.8 9.4L3.2 2.8L3 1.8Z" stroke="#d6981d" fill="#fff"/></g></svg>
<div class="c" style="left:1164px;top:6px">application-<span style="color:#222">...</span></div>
<svg style="left:1245px;top:6px" width="16" height="16" viewBox="0 0 16 16"><rect x="0.6" y="0.6" width="14.8" height="14.8" rx="1.6" fill="none" stroke="#b93030" stroke-width="1.2"/><circle cx="8" cy="8" r="4.5" fill="none" stroke="#b93030" stroke-width="1.2"/><path d="M4.8 4.8L11.2 11.2" stroke="#b93030" stroke-width="1.2"/></svg>
<div class="c jp" style="left:1264px;top:7px">拒否</div>
</div>
<div class="row" id="r9" style="top:611px;height:38px;background:#fef0d2">
<div class="cv" style="left:29px;top:1px;height:37px"></div>
<div class="cv" style="left:149px;top:1px;height:37px"></div>
<div class="cv" style="left:249px;top:1px;height:37px"></div>
<div class="cv" style="left:319px;top:1px;height:37px"></div>
<div class="cv" style="left:419px;top:1px;height:37px"></div>
<div class="cv" style="left:529px;top:1px;height:37px"></div>
<div class="cv" style="left:629px;top:1px;height:37px"></div>
<div class="cv" style="left:729px;top:1px;height:37px"></div>
<div class="cv" style="left:829px;top:1px;height:37px"></div>
<div class="cv" style="left:939px;top:1px;height:37px"></div>
<div class="cv" style="left:1039px;top:1px;height:37px"></div>
<div class="cv" style="left:1139px;top:1px;height:37px"></div>
<div class="cv" style="left:1239px;top:1px;height:37px"></div>
<div class="abs" style="left:0;top:38px;width:1340px;height:1px;background:#f1ecdc"></div>
<div class="num" style="top:4px">9</div>
<div class="c" style="left:35px;top:4px">intrazone-default</div>
<svg style="left:112px;top:20px" width="10" height="10" viewBox="0 0 10 10"><path fill-rule="evenodd" fill="#2f9e38" d="M3.93 1.14L4.13 -0.08L5.87 -0.08L6.07 1.14L6.97 1.52L7.97 0.79L9.21 2.03L8.48 3.03L8.86 3.93L10.08 4.13L10.08 5.87L8.86 6.07L8.48 6.97L9.21 7.97L7.97 9.21L6.97 8.48L6.07 8.86L5.87 10.08L4.13 10.08L3.93 8.86L3.03 8.48L2.03 9.21L0.79 7.97L1.52 6.97L1.14 6.07L-0.08 5.87L-0.08 4.13L1.14 3.93L1.52 3.03L0.79 2.03L2.03 0.79L3.03 1.52ZM5 2.1A2.9 2.9 0 1 0 5 7.9A2.9 2.9 0 1 0 5 2.1Z"/><circle cx="5" cy="5" r="1.9" fill="none" stroke="#2f9e38" stroke-width="0.9"/><circle cx="5" cy="5" r="0.7" fill="#2f9e38"/></svg>
<div class="c" style="left:155px;top:4px">none</div>
<div class="c k" style="left:255px;top:4px">intrazone</div>
<div class="c a" style="left:325px;top:4px">any</div>
<div class="c a" style="left:425px;top:4px">any</div>
<div class="c a" style="left:535px;top:4px">any</div>
<div class="c a" style="left:635px;top:4px">any</div>
<div class="c k" style="left:735px;top:4px">(intrazone)</div>
<div class="c a" style="left:835px;top:4px">any</div>
<div class="c a" style="left:945px;top:4px">any</div>
<div class="c a" style="left:1045px;top:4px">any</div>
<div class="c a" style="left:1145px;top:4px">any</div>
<svg style="left:1247px;top:8px" width="13" height="13" viewBox="0 0 13 13"><circle cx="6" cy="6" r="5.4" fill="none" stroke="#22a52c" stroke-width="1.15"/><path d="M3.3 6.3L5.3 8.2L8.9 4.1" fill="none" stroke="#22a52c" stroke-width="1.15"/></svg>
<div class="c jp" style="left:1264px;top:7px">許可</div>
</div>
<div class="row" id="r10" style="top:650px;height:30px;background:#fee8b9">
<div class="cv" style="left:29px;top:1px;height:29px"></div>
<div class="cv" style="left:149px;top:1px;height:29px"></div>
<div class="cv" style="left:249px;top:1px;height:29px"></div>
<div class="cv" style="left:319px;top:1px;height:29px"></div>
<div class="cv" style="left:419px;top:1px;height:29px"></div>
<div class="cv" style="left:529px;top:1px;height:29px"></div>
<div class="cv" style="left:629px;top:1px;height:29px"></div>
<div class="cv" style="left:729px;top:1px;height:29px"></div>
<div class="cv" style="left:829px;top:1px;height:29px"></div>
<div class="cv" style="left:939px;top:1px;height:29px"></div>
<div class="cv" style="left:1039px;top:1px;height:29px"></div>
<div class="cv" style="left:1139px;top:1px;height:29px"></div>
<div class="cv" style="left:1239px;top:1px;height:29px"></div>
<div class="num" style="top:4px">10</div>
<div class="c" style="left:35px;top:4px">interzone-default</div>
<svg style="left:112px;top:20px" width="10" height="10" viewBox="0 0 10 10"><path fill-rule="evenodd" fill="#2f9e38" d="M3.93 1.14L4.13 -0.08L5.87 -0.08L6.07 1.14L6.97 1.52L7.97 0.79L9.21 2.03L8.48 3.03L8.86 3.93L10.08 4.13L10.08 5.87L8.86 6.07L8.48 6.97L9.21 7.97L7.97 9.21L6.97 8.48L6.07 8.86L5.87 10.08L4.13 10.08L3.93 8.86L3.03 8.48L2.03 9.21L0.79 7.97L1.52 6.97L1.14 6.07L-0.08 5.87L-0.08 4.13L1.14 3.93L1.52 3.03L0.79 2.03L2.03 0.79L3.03 1.52ZM5 2.1A2.9 2.9 0 1 0 5 7.9A2.9 2.9 0 1 0 5 2.1Z"/><circle cx="5" cy="5" r="1.9" fill="none" stroke="#2f9e38" stroke-width="0.9"/><circle cx="5" cy="5" r="0.7" fill="#2f9e38"/></svg>
<div class="c" style="left:155px;top:4px">none</div>
<div class="c k" style="left:255px;top:4px">interzone</div>
<div class="c a" style="left:325px;top:4px">any</div>
<div class="c a" style="left:425px;top:4px">any</div>
<div class="c a" style="left:535px;top:4px">any</div>
<div class="c a" style="left:635px;top:4px">any</div>
<div class="c a" style="left:735px;top:4px">any</div>
<div class="c a" style="left:835px;top:4px">any</div>
<div class="c a" style="left:945px;top:4px">any</div>
<div class="c a" style="left:1045px;top:4px">any</div>
<div class="c a" style="left:1145px;top:4px">any</div>
<svg style="left:1245px;top:6px" width="16" height="16" viewBox="0 0 16 16"><rect x="0.6" y="0.6" width="14.8" height="14.8" rx="1.6" fill="none" stroke="#b93030" stroke-width="1.2"/><circle cx="8" cy="8" r="4.5" fill="none" stroke="#b93030" stroke-width="1.2"/><path d="M4.8 4.8L11.2 11.2" stroke="#b93030" stroke-width="1.2"/></svg>
<div class="c jp" style="left:1264px;top:7px">拒否</div>
</div>
<div class="abs" style="left:191px;top:609px;width:1340px;height:2px;background:#f9b52b"></div>
<svg class="abs" style="left:191px;top:490px" width="5" height="36"><path d="M0 3.5L3.6 0V35L0 31.5Z" fill="#e1e6e9"/><path d="M0.3 17.5L3 15V20Z" fill="#8a8f94"/></svg>
<div class="redbox" style="left:219px;top:521px;width:125px;height:27px"></div>
</body></html>
